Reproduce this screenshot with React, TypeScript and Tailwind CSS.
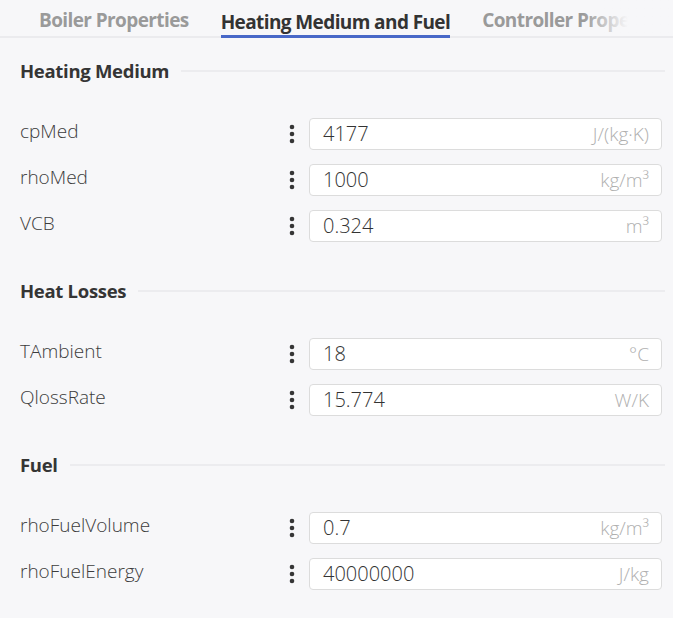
import React from 'react';

type Field = { label: string; value: string; unit: string };
type Section = { title: string; fields: Field[] };

const sections: Section[] = [
    {
        title: 'Heating Medium',
        fields: [
            { label: 'cpMed', value: '4177', unit: 'J/(kg·K)' },
            { label: 'rhoMed', value: '1000', unit: 'kg/m³' },
            { label: 'VCB', value: '0.324', unit: 'm³' },
        ],
    },
    {
        title: 'Heat Losses',
        fields: [
            { label: 'TAmbient', value: '18', unit: '°C' },
            { label: 'QlossRate', value: '15.774', unit: 'W/K' },
        ],
    },
    {
        title: 'Fuel',
        fields: [
            { label: 'rhoFuelVolume', value: '0.7', unit: 'kg/m³' },
            { label: 'rhoFuelEnergy', value: '40000000', unit: 'J/kg' },
        ],
    },
];

const Kebab: React.FC = () => (
    <svg width="8" height="20" viewBox="0 0 8 20" className="shrink-0">
        <circle cx="4" cy="3" r="2.3" fill="#363636" />
        <circle cx="4" cy="10" r="2.3" fill="#363636" />
        <circle cx="4" cy="17" r="2.3" fill="#363636" />
    </svg>
);

const Row: React.FC<{ field: Field }> = ({ field }) => (
    <div className="flex items-center h-[32px]">
        <div className="w-[288px] pl-[20px] text-[19px] font-light text-[#3c3c3c] -mt-[5px]">{field.label}</div>
        <div className="w-[21px] flex justify-start">
            <Kebab />
        </div>
        <div className="flex-1 mr-[11px] h-[32px] bg-white border border-[#dcdcdc] rounded-[4px] flex items-center justify-between pl-[13px] pr-[12px]">
            <span className="text-[20px] font-light text-[#333]">{field.value}</span>
            <span className="text-[19px] font-light text-[#b0b0b0]">{field.unit}</span>
        </div>
    </div>
);

export default function App() {
    return (
        <div
            className="w-[673px] h-[618px] bg-[#f7f7f9] overflow-hidden"
            style={{ fontFamily: '"Open Sans", "Noto Sans", sans-serif' }}
        >
            <div className="relative h-[38px] border-b-2 border-[#ebebee] flex items-end pl-[23px] whitespace-nowrap">
                <div className="px-[16px] pb-[3px] text-[19px] leading-[26px] font-bold text-[#9a9a9a] tracking-[-0.6px]">
                    Boiler Properties
                </div>
                <div className="px-[16px] flex flex-col">
                    <div className="pb-0 text-[19px] leading-[26px] font-bold text-[#333] tracking-[-0.6px]">
                        Heating Medium and Fuel
                    </div>
                    <div className="h-[3px] bg-[#4868c8] -mb-[2px]" />
                </div>
                <div className="px-[16px] pb-[3px] text-[19px] leading-[26px] font-bold text-[#9a9a9a] tracking-[-0.6px]">
                    Controller Properties
                </div>
                <div className="absolute right-0 top-0 h-[36px] w-[90px] bg-gradient-to-r from-transparent from-0% via-[#f7f7f9] via-50% to-[#f7f7f9]" />
            </div>

            {sections.map((s, i) => (
                <div key={s.title} className={i === 0 ? 'mt-[21px]' : 'mt-[37px]'}>
                    <div className="flex items-center h-[24px] pl-[20px] pr-[8px] gap-[12px]">
                        <span className="text-[18.5px] font-bold text-[#353535] tracking-[-0.3px]">{s.title}</span>
                        <div className="flex-1 h-[2px] bg-[#ececef]" />
                    </div>
                    <div className="mt-[35px] flex flex-col gap-[14px]">
                        {s.fields.map((f) => (
                            <Row key={f.label} field={f} />
                        ))}
                    </div>
                </div>
            ))}
        </div>
    );
}
